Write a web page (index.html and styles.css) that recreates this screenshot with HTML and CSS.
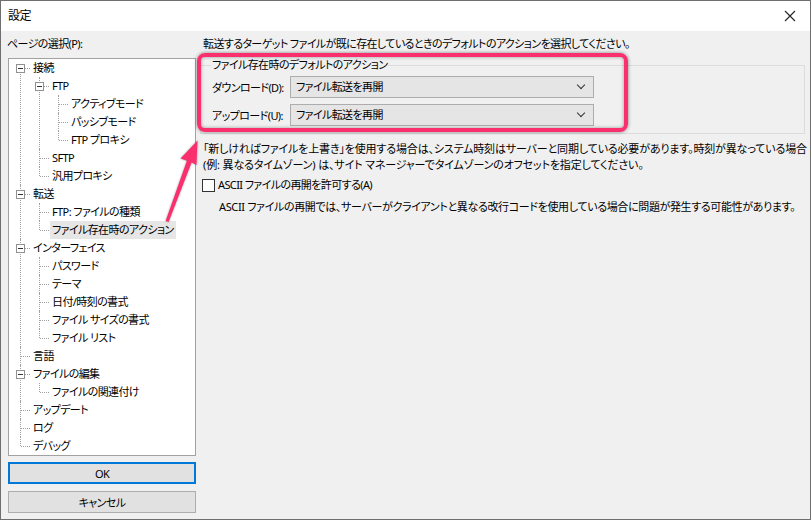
FILE: index.html
```html
<!DOCTYPE html>
<html lang="ja">
<head>
    <meta charset="UTF-8">
    <meta name="viewport" content="width=device-width, initial-scale=1.0">
    <title>設定</title>
    <link rel="stylesheet" href="styles.css">
</head>
<body>
    <div class="window">
        <div class="titlebar">
            <span class="title">設定</span>
            <svg class="close" width="12" height="12" viewBox="0 0 12 12">
                <path d="M1 1 L11 11 M11 1 L1 11" stroke="#222" stroke-width="1.1" fill="none"/>
            </svg>
        </div>

        <div class="client">
            <div class="left-col">
                <div class="caption">ページの選択(P):</div>
                <div class="tree-box">
                    <ul class="tree">
                        <li class="parent"><span class="toggle"></span><span class="node">接続</span>
                            <ul>
                                <li class="parent"><span class="toggle"></span><span class="node">FTP</span>
                                    <ul>
                                        <li><span class="node">アクティブモード</span></li>
                                        <li><span class="node">パッシブモード</span></li>
                                        <li><span class="node">FTP プロキシ</span></li>
                                    </ul>
                                </li>
                                <li><span class="node">SFTP</span></li>
                                <li><span class="node">汎用プロキシ</span></li>
                            </ul>
                        </li>
                        <li class="parent"><span class="toggle"></span><span class="node">転送</span>
                            <ul>
                                <li><span class="node">FTP: ファイルの種類</span></li>
                                <li><span class="node selected">ファイル存在時のアクション</span></li>
                            </ul>
                        </li>
                        <li class="parent"><span class="toggle"></span><span class="node">インターフェイス</span>
                            <ul>
                                <li><span class="node">パスワード</span></li>
                                <li><span class="node">テーマ</span></li>
                                <li><span class="node">日付/時刻の書式</span></li>
                                <li><span class="node">ファイル サイズの書式</span></li>
                                <li><span class="node">ファイル リスト</span></li>
                            </ul>
                        </li>
                        <li><span class="node">言語</span></li>
                        <li class="parent"><span class="toggle"></span><span class="node">ファイルの編集</span>
                            <ul>
                                <li><span class="node">ファイルの関連付け</span></li>
                            </ul>
                        </li>
                        <li><span class="node">アップデート</span></li>
                        <li><span class="node">ログ</span></li>
                        <li><span class="node">デバッグ</span></li>
                    </ul>
                </div>
                <button class="btn btn-default">OK</button>
                <button class="btn">キャンセル</button>
            </div>

            <div class="right-col">
                <p class="intro">転送するターゲット ファイルが既に存在しているときのデフォルトのアクションを選択してください。</p>

                <fieldset class="group">
                    <legend>ファイル存在時のデフォルトのアクション</legend>
                    <div class="field-row">
                        <label class="field-label">ダウンロード(D):</label>
                        <div class="combo">ファイル転送を再開<span class="chevron"></span></div>
                    </div>
                    <div class="field-row">
                        <label class="field-label">アップロード(U):</label>
                        <div class="combo">ファイル転送を再開<span class="chevron"></span></div>
                    </div>
                </fieldset>

                <p class="note">「新しければファイルを上書き」を使用する場合は、システム時刻はサーバーと同期している必要があります。時刻が異なっている場合<br>(例: 異なるタイムゾーン) は、サイト マネージャーでタイムゾーンのオフセットを指定してください。</p>

                <div class="check-row">
                    <span class="checkbox"></span>
                    <span>ASCII ファイルの再開を許可する(A)</span>
                </div>
                <p class="check-desc">ASCII ファイルの再開では、サーバーがクライアントと異なる改行コードを使用している場合に問題が発生する可能性があります。</p>
            </div>
        </div>

        <!-- annotation overlay -->
        <div class="highlight"></div>
        <svg class="arrow" width="812" height="520" viewBox="0 0 812 520">
            <polygon points="165.6,221 168.6,222 191.6,162.5 196.5,165 197.5,140.5 180.5,158.4 186.9,160.7" fill="#fa2f6e"/>
        </svg>
    </div>
</body>
</html>
```

FILE: styles.css
```css
html, body {
    margin: 0;
    padding: 0;
    background-color: #ffffff;
}
body {
    font-family: "Noto Sans", "Noto Sans CJK JP", sans-serif;
    font-size: 11px;
    letter-spacing: -0.6px;
    color: #000;
    font-feature-settings: "palt";
    overflow: hidden;
}
.window {
    position: relative;
    width: 811px;
    height: 520px;
    box-sizing: border-box;
    border: 1px solid #6f6f6f;
    display: flex;
    flex-direction: column;
}
.titlebar {
    height: 30px;
    background-color: #ffffff;
    display: flex;
    align-items: center;
    justify-content: space-between;
    padding: 0 14px 0 7px;
}
.title {
    font-size: 12px;
    line-height: 16px;
}
.client {
    flex: 1;
    background-color: #f0f0f0;
    display: flex;
    gap: 4px;
    padding: 5px 5px 6px 7px;
}
.left-col {
    width: 188px;
    display: flex;
    flex-direction: column;
}
.caption {
    line-height: 16px;
    margin-left: -1px;
}
.tree-box {
    flex: 1;
    margin-top: 6px;
    background-color: #ffffff;
    border: 1px solid #a2a2a2;
    overflow: hidden;
}
.tree, .tree ul {
    list-style: none;
    margin: 0;
    padding: 0;
}
.tree ul {
    margin-left: -3px;
}
.tree li {
    position: relative;
    padding-left: 22px;
}
.tree li::before {
    content: "";
    position: absolute;
    left: 12px;
    top: 9px;
    width: 9px;
    border-top: 1px dotted #a0a0a0;
}
.tree li::after {
    content: "";
    position: absolute;
    left: 11px;
    top: 0;
    bottom: 0;
    border-left: 1px dotted #a0a0a0;
}
.tree > li:first-child::after {
    top: 9px;
}
.tree li:last-child::after {
    bottom: auto;
    height: 9px;
}
.toggle {
    position: absolute;
    left: 7px;
    top: 5px;
    width: 7px;
    height: 7px;
    border: 1px solid #919191;
    background-color: #ffffff;
    z-index: 1;
}
.toggle::after {
    content: "";
    position: absolute;
    left: 1px;
    top: 3px;
    width: 5px;
    border-top: 1px solid #333;
}
.node {
    display: inline-block;
    line-height: 18px;
    height: 18px;
    padding: 0 2px;
    white-space: nowrap;
}
.node.selected {
    background-color: #e6e6e6;
}
.btn {
    height: 22px;
    margin: 6px 0 0;
    padding: 0;
    background-color: #e1e1e1;
    border: 1px solid #adadad;
    font-family: inherit;
    font-size: 11px;
    letter-spacing: inherit;
    font-feature-settings: "palt";
    color: #000;
}
.btn + .btn {
    margin-top: 7px;
}
.btn-default {
    border: 2px solid #0078d7;
}
.right-col {
    width: 605px;
}
.intro, .note, .check-desc {
    margin: 0;
    line-height: 16px;
    white-space: nowrap;
}
.intro {
    margin-left: 3px;
}
.group {
    margin: 6px 0 0;
    padding: 4px 10px 7px 11px;
    border: 1px solid #dcdcdc;
}
.group legend {
    padding: 0 1px;
    margin-left: -1px;
    line-height: 14px;
}
.field-row {
    display: flex;
    align-items: center;
}
.field-row + .field-row {
    margin-top: 6px;
}
.field-label {
    width: 78px;
    white-space: nowrap;
}
.combo {
    position: relative;
    width: 304px;
    height: 22px;
    box-sizing: border-box;
    line-height: 20px;
    padding-left: 5px;
    background-color: #e5e5e5;
    border: 1px solid #adadad;
}
.chevron {
    position: absolute;
    right: 9px;
    top: 5px;
    width: 5px;
    height: 5px;
    border-right: 1px solid #333;
    border-bottom: 1px solid #333;
    transform: rotate(45deg);
}
.note {
    margin-top: 7px;
    margin-left: 3px;
    letter-spacing: -0.15px;
}
.check-row {
    display: flex;
    align-items: center;
    gap: 3px;
    margin: 4px 0 0 2px;
    line-height: 16px;
}
.checkbox {
    width: 11px;
    height: 11px;
    border: 1px solid #333;
    background-color: #ffffff;
}
.check-desc {
    margin-top: 6px;
    margin-left: 19px;
    letter-spacing: -0.35px;
}
.highlight {
    position: absolute;
    left: 196px;
    top: 52px;
    width: 423px;
    height: 71px;
    border: 4px solid #fa2f6e;
    border-radius: 8px;
    box-shadow: 0 0 3px 1px rgba(0, 0, 0, 0.28), inset 0 0 3px 1px rgba(0, 0, 0, 0.22);
}
.arrow {
    position: absolute;
    left: -1px;
    top: -1px;
    filter: drop-shadow(0 0 1px rgba(0, 0, 0, 0.35));
}
```
